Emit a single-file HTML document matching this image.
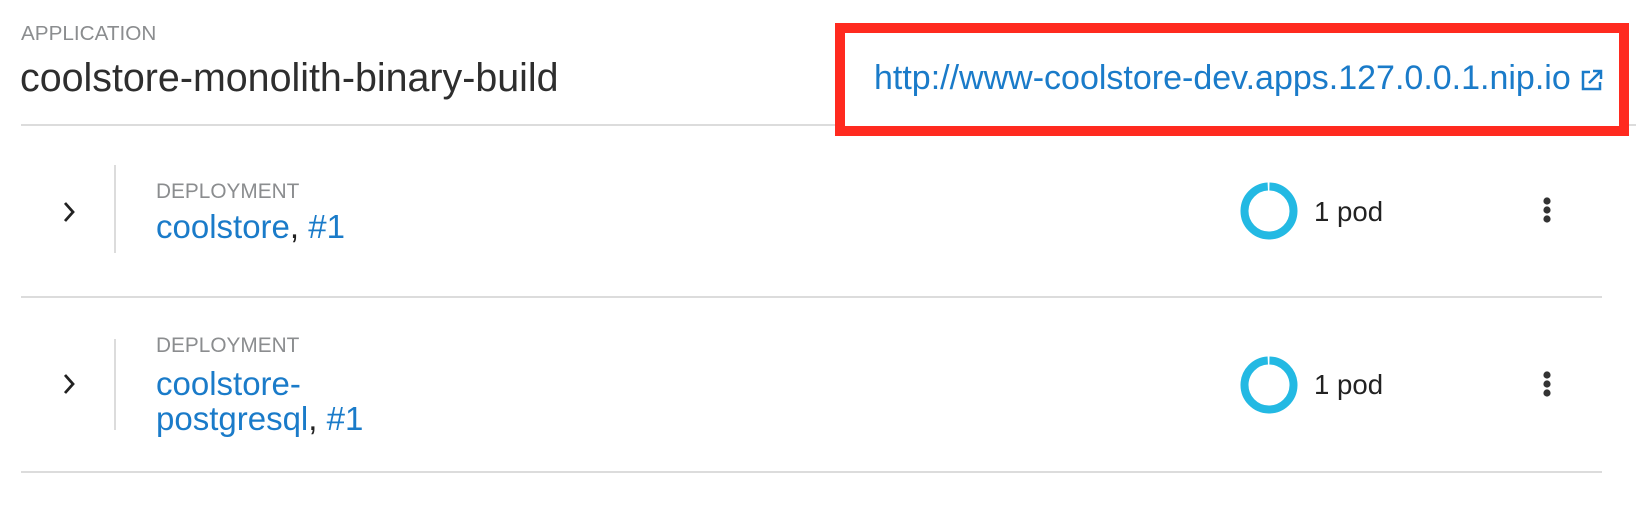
<!DOCTYPE html>
<html><head><style>
body{margin:0;width:1636px;height:508px;background:#fff;position:relative;overflow:hidden;font-family:"Liberation Sans",sans-serif;}
.a{position:absolute;white-space:nowrap}
.lbl{color:#8b8d8f;text-transform:uppercase}
.blue{color:#1a7bc9}
.hr{position:absolute;height:2px;background:#dcdcdc}
</style></head><body>
<div class="a lbl" style="left:21px;top:22px;font-size:20.7px;">APPLICATION</div>
<div class="a" style="left:20px;top:56px;font-size:39.4px;color:#2e2e2e;">coolstore-monolith-binary-build</div>
<div class="hr" style="left:21px;top:124px;width:1615px"></div>

<div class="a" style="left:835px;top:23px;width:774px;height:93px;border:10px solid #ff2a1f;background:#fff"></div>
<div class="a blue" style="left:874px;top:59px;font-size:34px;">http://www-coolstore-dev.apps.127.0.0.1.nip.io</div>
<svg class="a" style="left:1580px;top:68px" width="24" height="24" viewBox="0 0 24 24"><path d="M10 4H3v17h17v-7" fill="none" stroke="#1a7bc9" stroke-width="2.5"/><path d="M9 15L20 4M13 3h8v8" fill="none" stroke="#1a7bc9" stroke-width="2.5"/></svg>

<!-- row 1 -->
<svg class="a" style="left:61px;top:201px" width="16" height="22" viewBox="0 0 16 22"><path d="M4 2l8 9-8 9" fill="none" stroke="#222" stroke-width="2.8"/></svg>
<div class="a" style="left:114px;top:165px;width:2px;height:88px;background:#dcdcdc"></div>
<div class="a lbl" style="left:156px;top:180px;font-size:20.8px;">DEPLOYMENT</div>
<div class="a" style="left:156px;top:208px;font-size:33px;color:#222"><span class="blue">coolstore</span>, <span class="blue">#1</span></div>
<svg class="a" style="left:1239px;top:181px" width="60" height="60" viewBox="0 0 60 60"><circle cx="30" cy="30" r="24.5" fill="none" stroke="#23b9e3" stroke-width="8" stroke-dasharray="152 2" transform="rotate(-89 30 30)"/></svg>
<div class="a" style="left:1314px;top:196px;font-size:27.6px;color:#222">1 pod</div>
<svg class="a" style="left:1541px;top:196px" width="12" height="28"><circle cx="6" cy="5" r="3.6" fill="#333"/><circle cx="6" cy="14" r="3.6" fill="#333"/><circle cx="6" cy="23" r="3.6" fill="#333"/></svg>
<div class="hr" style="left:21px;top:296px;width:1581px"></div>

<!-- row 2 -->
<svg class="a" style="left:61px;top:373px" width="16" height="22" viewBox="0 0 16 22"><path d="M4 2l8 9-8 9" fill="none" stroke="#222" stroke-width="2.8"/></svg>
<div class="a" style="left:114px;top:339px;width:2px;height:91px;background:#dcdcdc"></div>
<div class="a lbl" style="left:156px;top:334px;font-size:20.8px;">DEPLOYMENT</div>
<div class="a" style="left:156px;top:366px;font-size:33px;color:#222;line-height:35px"><span class="blue">coolstore-</span><br><span class="blue">postgresql</span>, <span class="blue">#1</span></div>
<svg class="a" style="left:1239px;top:355px" width="60" height="60" viewBox="0 0 60 60"><circle cx="30" cy="30" r="24.5" fill="none" stroke="#23b9e3" stroke-width="8" stroke-dasharray="152 2" transform="rotate(-89 30 30)"/></svg>
<div class="a" style="left:1314px;top:369px;font-size:27.6px;color:#222">1 pod</div>
<svg class="a" style="left:1541px;top:370px" width="12" height="28"><circle cx="6" cy="5" r="3.6" fill="#333"/><circle cx="6" cy="14" r="3.6" fill="#333"/><circle cx="6" cy="23" r="3.6" fill="#333"/></svg>
<div class="hr" style="left:21px;top:471px;width:1581px"></div>
</body></html>
